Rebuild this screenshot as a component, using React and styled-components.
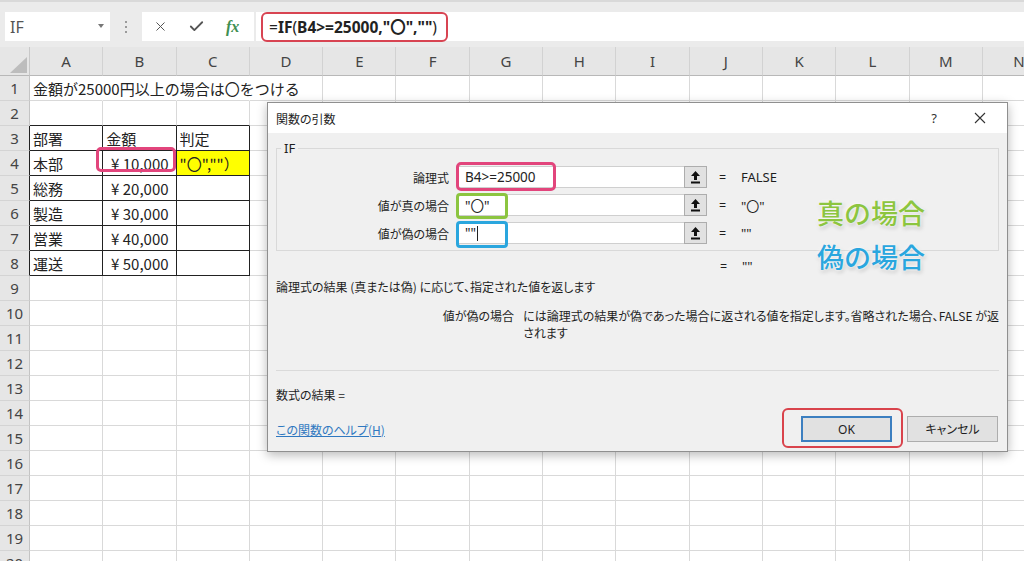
import React from 'react';
import styled, { createGlobalStyle } from 'styled-components';
import { X, Check } from 'lucide-react';

const GlobalStyle = createGlobalStyle`
  html, body { margin: 0; padding: 0; background: #fff; }
  body { font-family: "Noto Sans", "Noto Sans CJK JP", sans-serif; }
  * { box-sizing: border-box; }
`;

const Screen = styled.div`
  position: relative;
  width: 1024px;
  height: 561px;
  overflow: hidden;
  background: #fff;
  display: flex;
  flex-direction: column;
`;

const Chrome = styled.div`
  background: #ebebeb;
  border-top: 2px solid #d9d9d9;
  padding: 10px 0 6px 5px;
`;

const FormulaRow = styled.div`
  display: flex;
  height: 29px;
`;

const NameBox = styled.div`
  position: relative;
  width: 105px;
  background: #fff;
  display: flex;
  align-items: center;
  padding-left: 5px;
  font-size: 16px;
  color: #555;
`;

const Caret = styled.span`
  position: absolute;
  right: 6px;
  top: 12px;
  width: 0;
  height: 0;
  border-left: 3px solid transparent;
  border-right: 3px solid transparent;
  border-top: 4px solid #777;
`;

const Grip = styled.div`
  width: 32px;
  display: flex;
  flex-direction: column;
  align-items: center;
  justify-content: center;
  gap: 3px;
`;

const Dot = styled.span`
  width: 2px;
  height: 2px;
  background: #9a9a9a;
`;

const FxBox = styled.div`
  width: 112px;
  background: #fff;
  display: flex;
  align-items: center;
  padding-left: 11px;
  gap: 20px;
  color: #555;
`;

const FxText = styled.span`
  font-family: "Liberation Serif", serif;
  font-style: italic;
  font-weight: 700;
  font-size: 16px;
  color: #3f8f52;
  margin-left: 1px;
`;

const FormulaInput = styled.div`
  position: relative;
  flex: 1;
  margin-left: 2px;
  background: #fff;
  display: flex;
  align-items: center;
  padding-left: 13px;
  font-family: "Noto Sans", "Noto Sans CJK JP", sans-serif;
  font-size: 15.5px;
  color: #222;
  white-space: nowrap;
`;

const B = styled.b`
  font-weight: 700;
`;

const Outline = styled.div`
  position: absolute;
  left: ${p => p.$l}px;
  top: ${p => p.$t}px;
  width: ${p => p.$w}px;
  height: ${p => p.$h}px;
  border: ${p => p.$bw || 2}px solid ${p => p.$c};
  border-radius: ${p => p.$r || 5}px;
  pointer-events: none;
`;

const Sheet = styled.div`
  display: grid;
  grid-template-columns: 30px repeat(14, 73.3px);
  grid-template-rows: 29px repeat(20, 25px);
`;

const Corner = styled.div`
  position: relative;
  background: #e6e6e6;
  border-right: 1px solid #c8c8c8;
  border-bottom: 1px solid #b8b8b8;
  &::after {
    content: "";
    position: absolute;
    left: 10px;
    top: 10px;
    width: 17px;
    height: 16px;
    background: #bdbdbd;
    clip-path: polygon(100% 0, 100% 100%, 0 100%);
  }
`;

const ColHead = styled.div`
  background: #e6e6e6;
  border-right: 1px solid #d2d2d2;
  border-bottom: 1px solid #b8b8b8;
  display: flex;
  align-items: center;
  justify-content: center;
  font-size: 15px;
  color: #444;
`;

const RowHead = styled.div`
  background: #e6e6e6;
  border-right: 1px solid ${p => (p.$dark ? '#222' : '#c4c4c4')};
  border-bottom: 1px solid #d4d4d4;
  display: flex;
  align-items: center;
  justify-content: center;
  font-size: 15px;
  color: #444;
`;

const Cell = styled.div`
  position: relative;
  border-right: 1px solid ${p => p.$rc};
  border-bottom: 1px solid ${p => p.$bc};
  background: ${p => p.$bg || 'transparent'};
  display: flex;
  align-items: center;
  justify-content: ${p => (p.$right ? 'flex-end' : 'flex-start')};
  padding: 0 ${p => (p.$right ? '7px' : '3px')};
  font-family: "Noto Sans CJK JP", sans-serif;
  font-size: 15px;
  color: #222;
  white-space: nowrap;
  line-height: 1;
`;

const Dialog = styled.div`
  position: absolute;
  left: 267px;
  top: 102px;
  width: 741px;
  height: 350px;
  background: #f0f0f0;
  border: 1px solid #8f8f8f;
  box-shadow: 0 3px 10px rgba(0, 0, 0, 0.28);
  display: flex;
  flex-direction: column;
  font-family: "Noto Sans CJK JP", sans-serif;
  font-feature-settings: "palt";
  font-size: 12px;
  color: #1e1e1e;
`;

const TitleBar = styled.div`
  height: 30px;
  background: #fff;
  display: flex;
  align-items: center;
  padding-left: 8px;
`;

const Title = styled.div`
  flex: 1;
  font-size: 12px;
`;

const TitleBtn = styled.div`
  width: 46px;
  height: 30px;
  display: flex;
  align-items: center;
  justify-content: center;
  color: #333;
  font-family: "Noto Sans", sans-serif;
  font-size: 13px;
  margin-right: ${p => p.$mr ?? 0}px;
`;

const Body = styled.div`
  flex: 1;
  display: flex;
  flex-direction: column;
  padding: 0 8px;
`;

const Group = styled.div`
  position: relative;
  margin-top: 15px;
  height: 103px;
  border: 1px solid #d9d9d9;
  padding-top: 17px;
`;

const Legend = styled.span`
  position: absolute;
  left: 4px;
  top: -9px;
  padding: 0 3px;
  background: #f0f0f0;
  font-family: "Noto Sans", sans-serif;
  font-size: 13px;
  line-height: 16px;
`;

const ArgRow = styled.div`
  display: flex;
  align-items: center;
  height: 22px;
  margin-bottom: 6px;
`;

const ArgLabel = styled.div`
  width: 172px;
  margin-right: 8px;
  text-align: right;
`;

const ArgInput = styled.div`
  position: relative;
  width: 227px;
  height: 22px;
  background: #fff;
  border: 1px solid #cfcfcf;
  border-right: none;
  display: flex;
  align-items: center;
  padding-left: 7px;
  font-family: "Noto Sans", "Noto Sans CJK JP", sans-serif;
  font-size: 13.5px;
  color: #222;
`;

const Caretline = styled.span`
  display: inline-block;
  width: 1px;
  height: 15px;
  background: #222;
  margin-left: 1px;
`;

const RefButton = styled.div`
  width: 23px;
  height: 22px;
  background: #e1e1e1;
  border: 1px solid #adadad;
  display: flex;
  align-items: center;
  justify-content: center;
`;

const Eq = styled.span`
  margin-left: ${p => p.$ml ?? 12}px;
  font-family: "Noto Sans", sans-serif;
  font-size: 12.5px;
  width: 8px;
`;

const EqValue = styled.span`
  margin-left: 14px;
  font-family: "Noto Sans", "Noto Sans CJK JP", sans-serif;
  font-size: 13px;
`;

const ResultRow = styled.div`
  display: flex;
  align-items: center;
  margin-top: 7px;
  height: 16px;
  padding-left: 444px;
`;

const Text = styled.div`
  margin-top: ${p => p.$mt ?? 0}px;
  line-height: ${p => p.$lh ?? 16}px;
  white-space: nowrap;
`;

const DescRow = styled.div`
  display: flex;
  margin-top: 12px;
  line-height: 17px;
`;

const DescLabel = styled.div`
  width: 243px;
  margin-right: 9px;
  text-align: right;
  white-space: nowrap;
`;

const DescText = styled.div`
  flex: 1;
  white-space: nowrap;
`;

const Separator = styled.div`
  margin-top: 29px;
  height: 1px;
  background: #dadada;
`;

const Footer = styled.div`
  display: flex;
  align-items: center;
  height: 26px;
  margin-top: 13px;
  padding-right: 1px;
`;

const HelpLink = styled.a`
  flex: 1;
  color: #2f78c0;
  text-decoration: underline;
  font-size: 12px;
`;

const Button = styled.div`
  position: relative;
  width: 91px;
  height: 26px;
  margin-left: ${p => p.$ml ?? 0}px;
  background: #e1e1e1;
  border: ${p => (p.$primary ? '2px solid #3c7fc0' : '1px solid #adadad')};
  display: flex;
  align-items: center;
  justify-content: center;
  font-size: 12px;
  font-family: "Noto Sans", "Noto Sans CJK JP", sans-serif;
`;

const Note = styled.div`
  position: absolute;
  left: 817px;
  top: ${p => p.$top}px;
  font-family: "Noto Sans CJK JP", sans-serif;
  font-weight: 500;
  font-size: 27px;
  line-height: 1;
  color: ${p => p.$c};
  text-shadow: 0 0 2px #fff, 0 0 4px #fff, 1px 2px 4px rgba(0, 0, 0, 0.25);
`;

const RefIcon = () => (
  <svg width="11" height="14" viewBox="0 0 11 14">
    <path d="M5.5 1 L10 6 L7 6 L7 10 L4 10 L4 6 L1 6 Z" fill="#111" />
    <rect x="1" y="11.5" width="9" height="2" fill="#111" />
  </svg>
);

const CloseIcon = () => (
  <svg width="12" height="12" viewBox="0 0 12 12">
    <path d="M1 1 L11 11 M11 1 L1 11" stroke="#333" strokeWidth="1.1" />
  </svg>
);

const COLS = 'ABCDEFGHIJKLMN'.split('');

const DATA = {
  A1: '金額が25000円以上の場合は〇をつける',
  A3: '部署', B3: '金額', C3: '判定',
  A4: '本部', B4: '¥ 10,000', C4: '"〇",""）',
  A5: '総務', B5: '¥ 20,000',
  A6: '製造', B6: '¥ 30,000',
  A7: '営業', B7: '¥ 40,000',
  A8: '運送', B8: '¥ 50,000',
};

const GRID = '#d9d9d9';
const BLACK = '#222';

function cellProps(col, row) {
  const ci = COLS.indexOf(col);
  const boxed = row >= 3 && row <= 8 && ci <= 2;
  let rc = boxed ? BLACK : GRID;
  let bc = boxed ? BLACK : GRID;
  if (row === 2 && ci <= 2) bc = BLACK;
  if (row === 1 && ci <= 2) rc = 'transparent';
  return {
    $rc: rc,
    $bc: bc,
    $right: col === 'B' && row >= 4 && row <= 8,
    $bg: col === 'C' && row === 4 ? '#ffff00' : undefined,
  };
}

export default function App() {
  const rows = Array.from({ length: 20 }, (_, i) => i + 1);
  return (
    <Screen>
      <GlobalStyle />
      <Chrome>
        <FormulaRow>
          <NameBox>
            IF
            <Caret />
          </NameBox>
          <Grip>
            <Dot />
            <Dot />
            <Dot />
          </Grip>
          <FxBox>
            <X size={15} strokeWidth={1.6} color="#555" />
            <Check size={17} strokeWidth={2.6} color="#555" />
            <FxText>fx</FxText>
          </FxBox>
          <FormulaInput>
            =<B>IF</B>(<B>B4&gt;=25000,"〇",""</B>)
            <Outline $l={5} $t={0} $w={187} $h={30} $c="#d84452" $r={6} />
          </FormulaInput>
        </FormulaRow>
      </Chrome>

      <Sheet>
        <Corner />
        {COLS.map(c => (
          <ColHead key={c}>{c}</ColHead>
        ))}
        {rows.map(r => (
          <React.Fragment key={r}>
            <RowHead $dark={r >= 3 && r <= 8}>{r}</RowHead>
            {COLS.map(c => {
              const id = c + r;
              return (
                <Cell key={id} {...cellProps(c, r)}>
                  {DATA[id] ? <span>{DATA[id]}</span> : null}
                  {id === 'B4' && <Outline $l={-7} $t={-4} $w={80} $h={25} $c="#e2457c" $bw={3} $r={5} />}
                </Cell>
              );
            })}
          </React.Fragment>
        ))}
      </Sheet>

      <Dialog>
        <TitleBar>
          <Title>関数の引数</Title>
          <TitleBtn>?</TitleBtn>
          <TitleBtn $mr={4}>
            <CloseIcon />
          </TitleBtn>
        </TitleBar>
        <Body>
          <Group>
            <Legend>IF</Legend>
            <ArgRow>
              <ArgLabel>論理式</ArgLabel>
              <ArgInput>
                B4&gt;=25000
                <Outline $l={-2} $t={-5} $w={100} $h={29} $c="#e2457c" $bw={3} $r={5} />
              </ArgInput>
              <RefButton>
                <RefIcon />
              </RefButton>
              <Eq>=</Eq>
              <EqValue>FALSE</EqValue>
            </ArgRow>
            <ArgRow>
              <ArgLabel>値が真の場合</ArgLabel>
              <ArgInput>
                "〇"
                <Outline $l={-2} $t={-2} $w={52} $h={26} $c="#8cc540" $bw={3} $r={4} />
              </ArgInput>
              <RefButton>
                <RefIcon />
              </RefButton>
              <Eq>=</Eq>
              <EqValue>"〇"</EqValue>
            </ArgRow>
            <ArgRow>
              <ArgLabel>値が偽の場合</ArgLabel>
              <ArgInput>
                ""
                <Caretline />
                <Outline $l={-2} $t={-2} $w={52} $h={27} $c="#2aa6de" $bw={3} $r={4} />
              </ArgInput>
              <RefButton>
                <RefIcon />
              </RefButton>
              <Eq>=</Eq>
              <EqValue>""</EqValue>
            </ArgRow>
          </Group>
          <ResultRow>
            <Eq $ml={0}>=</Eq>
            <EqValue>""</EqValue>
          </ResultRow>
          <Text $mt={5}>論理式の結果 (真または偽) に応じて、指定された値を返します</Text>
          <DescRow>
            <DescLabel>値が偽の場合</DescLabel>
            <DescText>
              には論理式の結果が偽であった場合に返される値を指定します。省略された場合、FALSE が返
              <br />
              されます
            </DescText>
          </DescRow>
          <Separator />
          <Text $mt={16}>数式の結果 =</Text>
          <Footer>
            <HelpLink>この関数のヘルプ(H)</HelpLink>
            <Button $primary>
              OK
              <Outline $l={-21} $t={-10} $w={121} $h={40} $c="#d9434c" $r={6} />
            </Button>
            <Button $ml={15}>キャンセル</Button>
          </Footer>
        </Body>
      </Dialog>

      <Note $top={199} $c="#8cc540">真の場合</Note>
      <Note $top={243} $c="#2aa6de">偽の場合</Note>
    </Screen>
  );
}
